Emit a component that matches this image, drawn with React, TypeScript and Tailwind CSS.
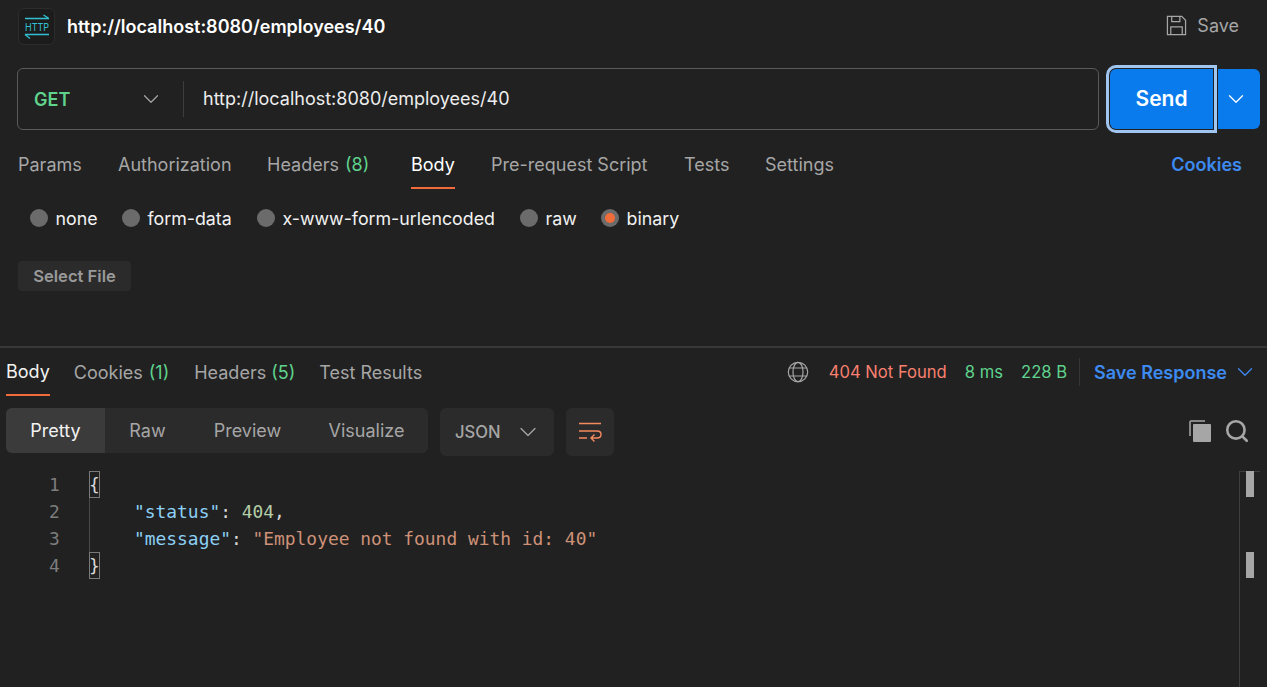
import { ChevronDown, Search } from "lucide-react";

const REQUEST_TABS = [
  { name: "Params", width: "w-[100px]" },
  { name: "Authorization", width: "w-[149px]" },
  { name: "Headers", count: "(8)", width: "w-[144px]" },
  { name: "Body", active: true, width: "w-[80px]" },
  { name: "Pre-request Script", width: "w-[193px]" },
  { name: "Tests", width: "w-[81px]" },
  { name: "Settings", width: "w-[80px]" },
];

const BODY_TYPES = [
  { name: "none", width: "w-[92px]" },
  { name: "form-data", width: "w-[135px]" },
  { name: "x-www-form-urlencoded", width: "w-[263px]" },
  { name: "raw", width: "w-[81px]" },
  { name: "binary", width: "w-[90px]", active: true },
];

function HttpIcon() {
  return (
    <div className="flex h-[37px] w-[37px] items-center justify-center rounded-md border border-[#2c2c2c] bg-[#1c1c1c]">
      <svg width="35" height="35" viewBox="0 0 35 35" fill="none" stroke="#30c0d2" strokeWidth="1.3">
        <path d="M6 9.5H30M24.5 6L30 9.5" />
        <path d="M6 25.5H30M6 25.5L11 29.5" />
        <text x="6" y="22" fontSize="11" stroke="none" fill="#30c0d2" textLength="24" lengthAdjust="spacingAndGlyphs" fontFamily="Inter, sans-serif">
          HTTP
        </text>
      </svg>
    </div>
  );
}

function SaveIcon() {
  return (
    <svg width="21" height="21" viewBox="0 0 22 22" fill="none" stroke="#a6a6a6" strokeWidth="1.3">
      <path d="M1.5 1.5H16.5L20.5 5.5V20.5H1.5Z" />
      <path d="M6 1.5V7H14.5V1.5M5 20.5V12.5H17V20.5" />
    </svg>
  );
}

function GlobeIcon() {
  return (
    <svg width="22" height="22" viewBox="0 0 22 22" fill="none" stroke="#a6a6a6" strokeWidth="1.2">
      <circle cx="11" cy="11" r="9.7" />
      <ellipse cx="11" cy="11" rx="5" ry="9.7" />
      <path d="M2.4 7H19.6M2.4 15H19.6" />
    </svg>
  );
}

function WrapIcon() {
  return (
    <svg width="24" height="22" viewBox="0 0 24 22" fill="none" stroke="#f58a5f" strokeWidth="1.4">
      <path d="M1 2.5H23M1 17H9" />
      <path d="M1 10H19Q23 10 23 13.5T19 17H13M16.5 13.5L13 17L16.5 20.5" />
    </svg>
  );
}

function CopyIcon() {
  return (
    <svg width="22" height="22" viewBox="0 0 22 22" fill="none">
      <path d="M1 16V2Q1 1 2 1H16" stroke="#a6a6a6" strokeWidth="1.5" />
      <rect x="4" y="4" width="18" height="18" rx="1" fill="#a6a6a6" />
    </svg>
  );
}

function Brace({ char }: { char: string }) {
  return (
    <span className="flex h-[27px] w-[11px] items-center justify-center border border-[#7a7a7a] text-[#d8d8d8]">
      {char}
    </span>
  );
}

export default function App() {
  return (
    <div className="flex h-[687px] w-[1267px] flex-col overflow-hidden bg-[#212121] font-['Inter',sans-serif] text-[#ffffff]">
      {/* title */}
      <div className="flex h-[52px] items-center pl-[18px] pr-[28px] pt-[1px]">
        <HttpIcon />
        <h1 className="ml-[12px] text-[18px] font-semibold">http://localhost:8080/employees/40</h1>
        <div className="ml-auto flex items-center gap-[10px] pb-[2px] text-[#a6a6a6]">
          <SaveIcon />
          <span className="text-[18px]">Save</span>
        </div>
      </div>

      {/* url bar */}
      <div className="mt-[16px] flex h-[62px] items-center pl-[17px]">
        <div className="flex h-[62px] w-[1082px] items-center rounded-md border border-[#5a5a5a]">
          <div className="flex w-[165px] items-center pl-[16px] pr-[19px]">
            <span className="text-[18px] font-semibold text-[#5fd38d]">GET</span>
            <ChevronDown className="ml-auto text-[#a6a6a6]" size={26} strokeWidth={1.1} />
          </div>
          <div className="h-[36px] w-px bg-[#3d3d3d]" />
          <span className="mb-[2px] ml-[19px] text-[18px] text-[#ededed]">http://localhost:8080/employees/40</span>
        </div>
        <button className="ml-[11px] flex h-[60px] w-[103px] items-center justify-center rounded-l-md bg-[#097bed] text-[21px] font-semibold outline-[3px] outline-offset-[1px] outline-[#9fc5f0]">
          Send
        </button>
        <button className="ml-[5px] flex h-[60px] w-[42px] items-center justify-center rounded-r-md bg-[#097bed] pr-[6px]">
          <ChevronDown size={26} strokeWidth={1.2} />
        </button>
      </div>

      {/* request tabs */}
      <div className="mt-[12px] flex h-[47px] items-stretch pl-[18px] pr-[25px] text-[18px] text-[#a6a6a6]">
        {REQUEST_TABS.map((tab) => (
          <div key={tab.name} className={`${tab.width} flex shrink-0`}>
            <div
              className={`flex h-full items-center gap-[6px] border-b-2 ${
                tab.active ? "border-[#f26b3a] text-[#ffffff]" : "border-transparent"
              }`}
            >
              <span>{tab.name}</span>
              {tab.count && <span className="text-[#5fd38d]">{tab.count}</span>}
            </div>
          </div>
        ))}
        <span className="ml-auto flex items-center pb-[2px] font-semibold text-[#3d8af0]">Cookies</span>
      </div>

      {/* body type */}
      <div className="mt-[15px] flex h-[28px] items-center pl-[30px] text-[17.8px] text-[#f2f2f2]">
        {BODY_TYPES.map((t) => (
          <div key={t.name} className={`${t.width} flex shrink-0 items-center gap-[7.5px]`}>
            <span className="flex h-[18px] w-[18px] items-center justify-center rounded-full bg-[#6b6b6b]">
              {t.active && <span className="h-[10px] w-[10px] rounded-full bg-[#f26b3a]" />}
            </span>
            <span className="pt-[2px]">{t.name}</span>
          </div>
        ))}
      </div>

      <div className="mt-[29px] pl-[18px]">
        <button className="flex h-[30px] w-[113px] items-center justify-center rounded-[4px] bg-[#2b2b2b] text-[16.6px] font-semibold text-[#999999]">
          Select File
        </button>
      </div>

      {/* response */}
      <div className="mt-[55px] h-[2px] bg-[#383838]" />
      <div className="flex h-[48px] items-stretch pl-[6px] pr-[9px] text-[18px] text-[#a6a6a6]">
        <div className="flex items-center border-b-2 border-[#f26b3a] text-[#f2f2f2]">Body</div>
        <div className="ml-[24px] flex items-center gap-[6px]">
          Cookies <span className="text-[#5fd38d]">(1)</span>
        </div>
        <div className="ml-[25px] flex items-center gap-[5px]">
          Headers <span className="text-[#5fd38d]">(5)</span>
        </div>
        <div className="ml-[24px] flex items-center">Test Results</div>

        <div className="ml-auto flex items-center">
          <GlobeIcon />
          <span className="ml-[20px] text-[16.6px] text-[#f8806f]">404 Not Found</span>
          <span className="ml-[18px] text-[16.6px] text-[#5fd38d]">8 ms</span>
          <span className="ml-[18px] text-[16.6px] text-[#5fd38d]">228 B</span>
          <div className="ml-[12px] h-[28px] w-px bg-[#353535]" />
          <span className="ml-[14px] font-semibold text-[#3d8af0]">Save Response</span>
          <ChevronDown className="ml-[5px] text-[#3d8af0]" size={26} strokeWidth={1.2} />
        </div>
      </div>

      {/* toolbar */}
      <div className="mt-[12px] flex h-[48px] pl-[6px] pr-[17px]">
        <div className="flex h-[45px] w-[422px] rounded-md bg-[#2b2b2b] text-[18px] text-[#a6a6a6]">
          <div className="flex w-[99px] items-center justify-center rounded-l-md bg-[#3b3b3b] text-[#f2f2f2]">Pretty</div>
          <div className="flex w-[85px] items-center justify-center">Raw</div>
          <div className="flex w-[115px] items-center justify-center">Preview</div>
          <div className="flex flex-1 items-center justify-center">Visualize</div>
        </div>
        <div className="ml-[12px] flex h-[48px] w-[114px] items-center rounded-md bg-[#2b2b2b] pl-[15px] text-[16.6px] font-medium text-[#a6a6a6]">
          JSON
          <ChevronDown className="ml-[13px]" size={28} strokeWidth={1.1} />
        </div>
        <div className="ml-[12px] flex h-[48px] w-[48px] items-center justify-center rounded-md bg-[#2b2b2b]">
          <WrapIcon />
        </div>
        <div className="ml-auto flex h-[45px] items-center gap-[13px]">
          <CopyIcon />
          <Search size={26} strokeWidth={2.4} className="text-[#a6a6a6]" />
        </div>
      </div>

      {/* code */}
      <div className="relative mt-[15px] flex-1 font-['DejaVu_Sans_Mono',monospace] text-[17.9px] leading-[27px]">
        <div className="flex pl-[49px]">
          <div className="w-[40px] text-[#7d7d7d]">
            <div>1</div>
            <div>2</div>
            <div>3</div>
            <div>4</div>
          </div>
          <div className="relative">
            <Brace char="{" />
            <div className="ml-[45px] whitespace-pre">
              <span className="text-[#8cd0f5]">"status"</span>
              <span className="text-[#d8d8d8]">: </span>
              <span className="text-[#b5cea8]">404</span>
              <span className="text-[#d8d8d8]">,</span>
            </div>
            <div className="ml-[45px] whitespace-pre">
              <span className="text-[#8cd0f5]">"message"</span>
              <span className="text-[#d8d8d8]">: </span>
              <span className="text-[#ce9178]">"Employee not found with id: 40"</span>
            </div>
            <Brace char="}" />
            <div className="absolute left-0 top-[27px] h-[54px] w-px bg-[#4a4a4a]" />
          </div>
        </div>
        {/* overview ruler */}
        <div className="absolute bottom-0 right-[27px] top-0 w-px bg-[#3f3f3f]" />
        <div className="absolute right-[7px] top-0 h-px w-[20px] bg-[#3f3f3f]" />
        <div className="absolute right-[13px] top-0 h-[26px] w-[8px] bg-[#a6a6a6]" />
        <div className="absolute right-[13px] top-[81px] h-[26px] w-[8px] bg-[#a6a6a6]" />
      </div>
    </div>
  );
}
